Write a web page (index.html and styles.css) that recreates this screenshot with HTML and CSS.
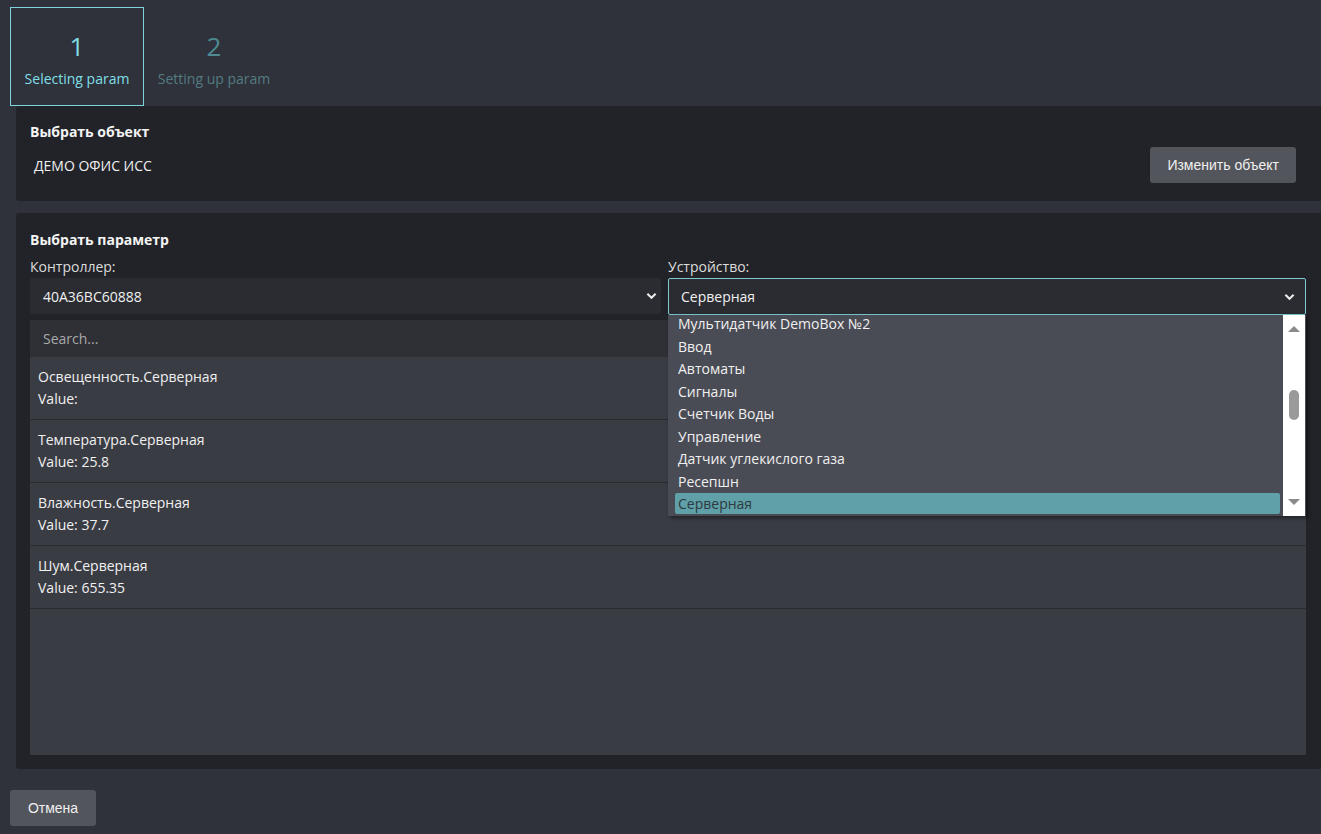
FILE: index.html
```html
<!DOCTYPE html>
<html lang="ru">
<head>
<meta charset="utf-8">
<title>Selecting param</title>
<link rel="stylesheet" href="styles.css">
</head>
<body>
<div class="page">
  <div class="steps">
    <div class="step active">
      <div class="step-num">1</div>
      <div class="step-label">Selecting param</div>
    </div>
    <div class="step">
      <div class="step-num">2</div>
      <div class="step-label">Setting up param</div>
    </div>
  </div>

  <section class="panel panel-object">
    <div class="panel-title">Выбрать объект</div>
    <div class="object-row">
      <span class="object-name">ДЕМО ОФИС ИСС</span>
      <button class="btn">Изменить объект</button>
    </div>
  </section>

  <section class="panel panel-param">
    <div class="panel-title">Выбрать параметр</div>
    <div class="selects">
      <div class="field">
        <label class="field-label">Контроллер:</label>
        <div class="select select-left">
          <span>40A36BC60888</span>
          <svg class="chev" viewBox="0 0 12 8" width="11" height="8"><path d="M1.5 1.5 L6 6 L10.5 1.5" fill="none" stroke="#ececec" stroke-width="2.2"/></svg>
        </div>
      </div>
      <div class="field field-right">
        <label class="field-label">Устройство:</label>
        <div class="select select-open">
          <span>Серверная</span>
          <svg class="chev" viewBox="0 0 12 8" width="11" height="8"><path d="M1.5 1.5 L6 6 L10.5 1.5" fill="none" stroke="#ececec" stroke-width="2.2"/></svg>
        </div>
        <div class="dropdown">
          <ul class="options">
            <li>Мультидатчик DemoBox №2</li>
            <li>Ввод</li>
            <li>Автоматы</li>
            <li>Сигналы</li>
            <li>Счетчик Воды</li>
            <li>Управление</li>
            <li>Датчик углекислого газа</li>
            <li>Ресепшн</li>
            <li class="selected">Серверная</li>
          </ul>
          <div class="scrollbar">
            <span class="arrow up"></span>
            <span class="thumb"></span>
            <span class="arrow down"></span>
          </div>
        </div>
      </div>
    </div>
    <div class="search">Search...</div>
    <div class="list">
      <div class="item"><div>Освещенность.Серверная</div><div>Value:</div></div>
      <div class="item"><div>Температура.Серверная</div><div>Value: 25.8</div></div>
      <div class="item"><div>Влажность.Серверная</div><div>Value: 37.7</div></div>
      <div class="item"><div>Шум.Серверная</div><div>Value: 655.35</div></div>
    </div>
  </section>

  <button class="btn btn-cancel">Отмена</button>
</div>
</body>
</html>
```

FILE: styles.css
```css
* { box-sizing: border-box; }
html, body { margin: 0; padding: 0; }
body {
  background: #2f323b;
  font-family: "Open Sans", "DejaVu Sans", sans-serif;
  color: #ececec;
  font-size: 14px;
  width: 1321px;
  height: 834px;
  overflow: hidden;
}
.page {
  padding: 7px 0 0 10px;
}
.steps {
  display: flex;
  gap: 3px;
  height: 99px;
}
.step {
  width: 134px;
  height: 99px;
  display: flex;
  flex-direction: column;
  align-items: center;
  padding-top: 22px;
  border: 1px solid transparent;
}
.step.active {
  border-color: #7dd4da;
}
.step-num {
  font-size: 26px;
  line-height: 32px;
  color: #4d8a92;
}
.step-label {
  font-size: 14px;
  line-height: 20px;
  margin-top: 7px;
  color: #547b81;
  white-space: nowrap;
}
.step.active .step-num,
.step.active .step-label {
  color: #80dfe6;
}

.panel {
  margin-left: 6px;
  background: #222328;
  border-radius: 3px 0 0 3px;
}
.panel-title {
  font-weight: 700;
  font-size: 14px;
  line-height: 18px;
  color: #f4f4f4;
}
.panel-object {
  height: 95px;
  padding: 17px 25px 0 14px;
}
.object-row {
  display: flex;
  align-items: center;
  justify-content: space-between;
  margin-top: 6px;
}
.object-name {
  padding-left: 4px;
  font-size: 14px;
  color: #f0f0f0;
}
.btn {
  height: 36px;
  padding: 0 17px;
  background: #53555c;
  border: none;
  border-radius: 3px;
  color: #f0f0f0;
  font-family: "Liberation Sans", Arial, sans-serif;
  font-size: 14px;
}

.panel-param {
  margin-top: 12px;
  height: 556px;
  padding: 18px 15px 14px 14px;
  display: flex;
  flex-direction: column;
}
.selects {
  display: grid;
  grid-template-columns: 631px 1fr;
  column-gap: 7px;
  margin-top: 9px;
}
.field { position: relative; }
.field-label {
  display: block;
  line-height: 18px;
  font-size: 14px;
  color: #dcdcdc;
  margin-bottom: 2px;
}
.select {
  height: 36px;
  background: #2b2c31;
  display: flex;
  align-items: center;
  justify-content: space-between;
  padding: 0 4px 0 13px;
  font-size: 14px;
  color: #f0f0f0;
  border-radius: 2px;
}
.select-open {
  height: 37px;
  border: 1px solid #7ccbd1;
  padding: 0 10px 0 12px;
}
.chev { display: block; }

.dropdown {
  position: absolute;
  left: 0;
  right: 0;
  top: 57px;
  height: 201px;
  background: #4a4c55;
  box-shadow: 2px 2px 4px rgba(0, 0, 0, 0.45);
  overflow: hidden;
  z-index: 5;
  display: flex;
}
.options {
  list-style: none;
  margin: -2px 0 0 0;
  padding: 0;
  flex: 1;
}
.options li {
  height: 22.5px;
  line-height: 22.5px;
  margin: 0 3px 0 7px;
  padding: 0 3px;
  font-size: 14px;
  color: #f0f0f0;
  white-space: nowrap;
}
.options li.selected {
  background: #5fa0a9;
  color: #2e3a3f;
  border-radius: 2px;
  height: 21px;
  line-height: 21px;
  margin-top: 0;
}
.scrollbar {
  width: 22px;
  background: #ffffff;
  margin-right: 1px;
  position: relative;
  flex: none;
}
.arrow {
  position: absolute;
  left: 5px;
  width: 0;
  height: 0;
  border-left: 6px solid transparent;
  border-right: 6px solid transparent;
}
.arrow.up { top: 11px; border-bottom: 6px solid #8a8a8a; }
.arrow.down { bottom: 11px; border-top: 6px solid #8a8a8a; }
.thumb {
  position: absolute;
  left: 6px;
  top: 75px;
  width: 10px;
  height: 30px;
  border-radius: 5px;
  background: #9a9a9a;
}

.search {
  margin-top: 5px;
  height: 37px;
  line-height: 37px;
  background: #2e3036;
  padding-left: 13px;
  color: #a9a9a9;
  font-size: 14px;
}
.list {
  flex: 1;
  background: #3a3c44;
}
.item {
  height: 63px;
  padding: 9px 8px 0;
  border-bottom: 1px solid #2a2b30;
  font-size: 14px;
  line-height: 22px;
  color: #f0f0f0;
}

.btn-cancel {
  margin-top: 21px;
  width: 86px;
  padding: 0;
}
```
